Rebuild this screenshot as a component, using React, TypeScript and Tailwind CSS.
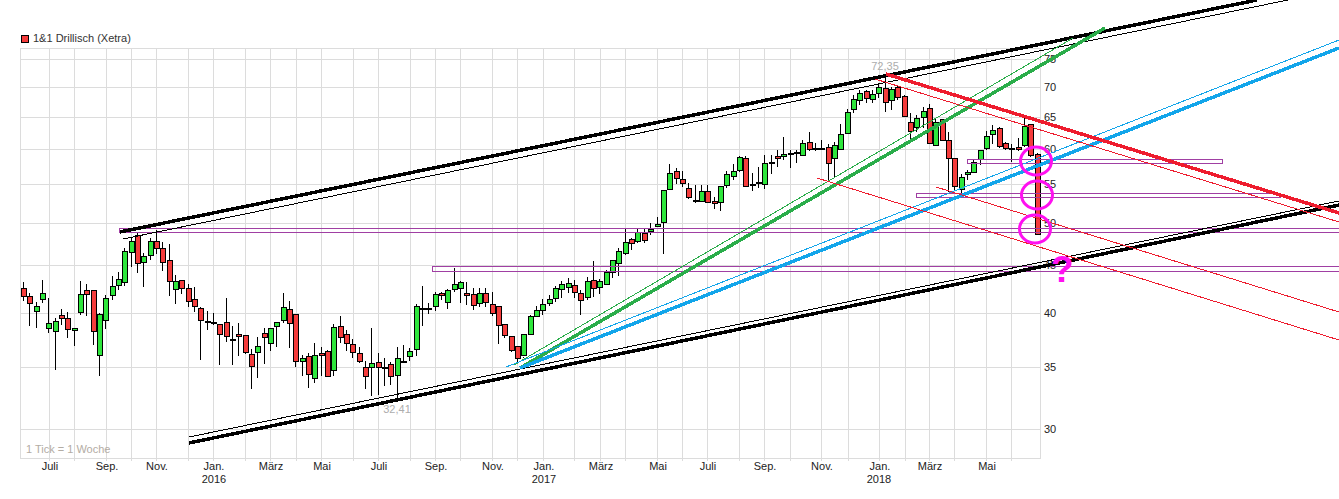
// 1&1 Drillisch weekly candle chart with hand drawn trend lines on top.
// Candle values are page pixels, read off in batches: base + v / 3.

type Kind = "g" | "r" | "d";
type Candle = [number, number, number, number, Kind];

const FONT = { fontFamily: '"Liberation Sans", Arial, sans-serif' };

const GREEN = "#2ee63c";
const RED = "#f43c3c";
const PURPLE = "#a03fa3";
const MAGENTA = "#ff10f0";

const batches: { base: number; rows: Candle[] }[] = [
  {
    base: 225,
    rows: [
      [170, 190, 214, 228, "r"], [205, 212, 233, 302, "r"], [232, 244, 260, 308, "g"], [165, 205, 223, 234, "g"],
      [218, 295, 311, 323, "g"], [280, 287, 317, 435, "g"], [252, 271, 281, 300, "r"], [262, 280, 314, 338, "r"],
      [308, 310, 317, 363, "g"], [168, 208, 263, 270, "g"], [178, 196, 209, 273, "r"], [196, 196, 319, 360, "r"],
      [265, 268, 391, 452, "g"], [210, 220, 286, 311, "g"], [153, 184, 211, 224, "g"], [140, 163, 181, 195, "g"],
      [70, 79, 172, 183, "g"], [40, 49, 82, 125, "g"], [20, 30, 115, 143, "r"], [85, 92, 109, 186, "g"],
      [38, 49, 91, 105, "g"], [15, 49, 70, 87, "r"], [52, 70, 112, 137, "r"], [57, 106, 169, 213, "r"],
      [150, 169, 193, 237, "g"], [166, 166, 190, 207, "r"], [178, 190, 229, 245, "r"], [186, 223, 245, 261, "r"],
      [245, 250, 286, 405, "r"], [258, 288, 290, 315, "d"], [264, 290, 292, 300, "d"], [296, 298, 328, 420, "r"],
      [220, 292, 334, 352, "r"], [303, 343, 346, 420, "d"], [295, 328, 334, 392, "r"], [330, 331, 383, 386, "r"],
      [373, 388, 425, 492, "r"], [336, 364, 382, 458, "g"], [310, 325, 338, 417, "r"], [310, 310, 355, 378, "g"],
    ],
  },
  {
    base: 260,
    rows: [
      [186, 187, 200, 260, "g"], [99, 142, 181, 190, "g"], [124, 148, 190, 263, "r"], [162, 162, 304, 320, "r"],
      [285, 295, 304, 347, "g"], [280, 289, 344, 383, "r"], [250, 286, 355, 370, "g"], [262, 280, 287, 347, "r"],
      [270, 273, 347, 352, "r"], [193, 202, 331, 347, "g"], [168, 199, 232, 250, "r"], [210, 223, 250, 273, "r"],
      [236, 253, 277, 293, "r"], [260, 280, 304, 310, "r"], [304, 322, 349, 386, "r"], [205, 310, 322, 408, "g"],
      [278, 307, 322, 404, "r"], [295, 321, 323, 378, "d"], [305, 313, 349, 376, "r"], [262, 295, 345, 415, "g"],
      [255, 304, 305, 307, "d"], [265, 274, 289, 302, "g"], [132, 139, 268, 288, "g"], [78, 143, 145, 198, "d"],
      [130, 143, 145, 162, "d"], [95, 103, 139, 152, "g"], [95, 100, 106, 120, "r"], [88, 91, 127, 147, "g"],
      [25, 73, 89, 97, "g"], [64, 65, 82, 128, "g"], [67, 100, 106, 135, "r"], [85, 103, 136, 150, "r"],
      [85, 100, 131, 140, "g"], [83, 100, 127, 142, "r"], [97, 133, 160, 168, "r"], [139, 139, 196, 252, "r"],
      [193, 193, 226, 235, "r"], [228, 229, 271, 277, "r"], [258, 259, 296, 305, "r"], [290, 221, 284, 295, "g"],
      [165, 167, 220, 222, "g"], [138, 151, 169, 172, "g"],
    ],
  },
  {
    base: 150,
    rows: [
      [448, 463, 481, 495, "g"], [435, 448, 460, 468, "g"], [408, 415, 445, 457, "g"], [394, 403, 418, 444, "g"],
      [385, 400, 412, 430, "g"], [390, 406, 428, 443, "r"], [420, 428, 448, 494, "r"], [380, 394, 442, 449, "g"],
      [333, 391, 415, 441, "r"], [388, 394, 412, 431, "g"], [360, 365, 400, 400, "g"], [330, 331, 367, 385, "g"],
      [295, 304, 341, 378, "g"], [237, 277, 311, 316, "g"], [263, 268, 280, 300, "r"], [238, 247, 274, 280, "g"],
      [237, 248, 268, 278, "r"], [220, 237, 244, 256, "g"], [202, 223, 229, 232, "g"], [120, 121, 217, 312, "g"],
      [42, 70, 118, 120, "g"], [55, 64, 85, 103, "r"], [63, 88, 100, 110, "r"], [100, 115, 142, 148, "r"],
      [105, 151, 154, 160, "d"], [105, 122, 151, 155, "g"], [105, 122, 154, 160, "r"], [142, 154, 160, 178, "r"],
      [108, 109, 157, 182, "g"], [62, 73, 106, 113, "g"], [43, 62, 76, 90, "g"], [18, 22, 61, 65, "g"],
      [18, 25, 109, 112, "r"], [70, 103, 106, 122, "d"], [50, 97, 100, 115, "d"], [16, 40, 103, 117, "g"],
      [15, 37, 40, 72, "d"], [0, 19, 25, 50, "r"],
    ],
  },
  {
    base: 75,
    rows: [
      [186, 238, 244, 256, "g"], [225, 235, 238, 278, "d"], [226, 232, 236, 265, "r"], [195, 205, 241, 243, "g"],
      [172, 202, 222, 228, "r"], [205, 220, 222, 228, "d"], [195, 218, 219, 222, "d"], [208, 217, 265, 315, "r"],
      [200, 211, 250, 310, "g"], [148, 176, 220, 225, "g"], [103, 112, 174, 178, "g"], [60, 73, 103, 115, "g"],
      [45, 53, 73, 90, "g"], [45, 49, 71, 83, "r"], [45, 58, 73, 85, "g"], [30, 35, 54, 70, "g"],
      [0, 38, 79, 110, "r"], [35, 43, 76, 105, "g"], [30, 36, 67, 75, "r"], [60, 62, 121, 122, "r"],
      [115, 142, 169, 195, "r"], [120, 130, 157, 172, "g"], [95, 109, 126, 160, "g"], [88, 100, 205, 207, "r"],
      [130, 140, 208, 210, "g"], [133, 133, 196, 197, "r"], [170, 196, 250, 350, "r"], [250, 250, 334, 348, "r"],
      [298, 307, 343, 360, "g"], [285, 292, 298, 315, "g"], [255, 262, 292, 295, "g"], [226, 226, 253, 270, "g"],
      [167, 182, 217, 225, "g"], [150, 166, 178, 207, "g"], [155, 160, 214, 220, "r"], [200, 205, 220, 225, "r"],
      [208, 220, 222, 260, "d"], [190, 217, 223, 228, "r"], [130, 153, 211, 215, "g"], [146, 148, 241, 247, "r"],
      [235, 238, 478, 478, "r"],
    ],
  },
];

const candles = batches.flatMap((b) =>
  b.rows.map(([h, t, e, l, k]) => ({
    high: b.base + h / 3,
    top: b.base + t / 3,
    bottom: b.base + e / 3,
    low: b.base + l / 3,
    kind: k,
  }))
);

const hLines = [59, 87, 117, 149, 184, 223, 265, 313, 367, 429];
const vLines = [
  49, 74, 106, 131, 156, 188, 213, 245, 270, 296, 321, 353, 378, 410, 435, 460, 492, 517, 543, 574, 600, 625, 657,
  682, 707, 739, 764, 790, 821, 848, 879, 905, 929, 954, 986, 1011,
];

const months: [string, number][] = [
  ["Juli", 50], ["Sep.", 107], ["Nov.", 157], ["Jan.", 214], ["März", 271], ["Mai", 322],
  ["Juli", 379], ["Sep.", 436], ["Nov.", 493], ["Jan.", 544], ["März", 601], ["Mai", 658],
  ["Juli", 708], ["Sep.", 765], ["Nov.", 822], ["Jan.", 880], ["März", 930], ["Mai", 987],
];
const years: [string, number][] = [["2016", 214], ["2017", 544], ["2018", 879]];
const prices: [string, number][] = [
  ["75", 59], ["70", 87], ["65", 117], ["60", 149], ["55", 184], ["50", 223], ["45", 265], ["40", 313], ["35", 367], ["30", 429],
];

// x1, y1, x2, y2, colour, width
const trendLines: [number, number, number, number, string, number][] = [
  [120, 232, 1257, 0, "#000000", 3.5],
  [123, 239, 1288, 0, "#000000", 1],
  [189, 443, 1339, 205, "#000000", 3.5],
  [189, 437, 1339, 201, "#000000", 1],
  [520, 368, 1105, 28, "#2aad4a", 3.5],
  [514, 365, 1073, 38, "#2aad4a", 1],
  [520, 368, 1339, 48, "#12a5ea", 3.5],
  [506, 367, 1339, 40, "#12a5ea", 1],
  [886, 74, 1339, 213, "#ee1c2e", 3.5],
  [875, 79, 1339, 222, "#ee1c2e", 1],
  [817, 178, 1339, 340, "#ee1c2e", 1],
  [936, 187, 1339, 312, "#ee1c2e", 1],
];

// x, y, right, bottom
const zones: [number, number, number, number][] = [
  [119.5, 228.5, 1345, 232.5],
  [432.5, 266.5, 1345, 271.5],
  [967.5, 159.5, 1222.5, 163.5],
  [916.5, 193.5, 1280.5, 197.5],
];

const circles: [number, number][] = [
  [1036, 161],
  [1037, 195],
  [1035, 229],
];

function CandleMark({ index }: { index: number }) {
  const c = candles[index];
  const cx = Math.round(23 + index * 6.335) + 0.5;
  return (
    <g>
      <line x1={cx} x2={cx} y1={c.high} y2={c.low} stroke="#000" />
      {c.kind === "d" ? (
        <rect x={cx - 3} y={c.top} width={6} height={2} fill="#000" />
      ) : (
        <rect
          x={cx - 2.5}
          y={Math.round(c.top) + 0.5}
          width={5}
          height={Math.max(Math.round(c.bottom - c.top), 1)}
          fill={c.kind === "g" ? GREEN : RED}
          stroke="#000"
        />
      )}
    </g>
  );
}

export default function App() {
  return (
    <div className="relative h-[499px] w-[1339px] overflow-hidden bg-white" style={FONT}>
      <div className="flex h-12 items-end gap-1 pb-[5px] pl-[21px] text-[11px] leading-[10px] text-[#333333]">
        <span className="h-2 w-2 border border-black bg-[#f43c3c]" />
        <span>1&amp;1 Drillisch (Xetra)</span>
      </div>

      <svg className="absolute inset-0" width={1339} height={499} viewBox="0 0 1339 499" shapeRendering="crispEdges">
        {hLines.map((y) => (
          <line key={y} x1={20} x2={1040} y1={y + 0.5} y2={y + 0.5} stroke="#dcdcdc" />
        ))}
        {vLines.map((x) => (
          <line key={x} x1={x + 0.5} x2={x + 0.5} y1={48} y2={461} stroke="#dcdcdc" />
        ))}
        <rect x={20.5} y={48.5} width={1020} height={410} fill="none" stroke="#dcdcdc" />

        <g fontSize={11} fill="#222222">
          {months.map(([label, x]) => (
            <text key={label + x} x={x} y={470} textAnchor="middle">
              {label}
            </text>
          ))}
          {years.map(([label, x]) => (
            <text key={label} x={x} y={483} textAnchor="middle">
              {label}
            </text>
          ))}
          {prices.map(([label, y]) => (
            <text key={label} x={1044} y={y + 4}>
              {label}
            </text>
          ))}
        </g>

        <g fontSize={11} fill="#adadad">
          <text x={885} y={70} textAnchor="middle">72,35</text>
          <text x={397} y={413} textAnchor="middle">32,41</text>
          <text x={26} y={453} fill="#b3aca4">1 Tick = 1 Woche</text>
        </g>

        {candles.map((_, i) => (
          <CandleMark key={i} index={i} />
        ))}

        {zones.map(([x, y, r, b]) => (
          <rect key={y} x={x} y={y} width={r - x} height={b - y} fill="none" stroke={PURPLE} />
        ))}

        {trendLines.map(([x1, y1, x2, y2, colour, width], i) => (
          <line key={i} x1={x1} y1={y1} x2={x2} y2={y2} stroke={colour} strokeWidth={width} />
        ))}

        {circles.map(([cx, cy]) => (
          <ellipse key={cy} cx={cx} cy={cy} rx={15.5} ry={14} fill="none" stroke={MAGENTA} strokeWidth={3} shapeRendering="auto" />
        ))}
        <text x={1051} y={282} fontSize={37} fontWeight={700} fill={MAGENTA}>?</text>
      </svg>
    </div>
  );
}
